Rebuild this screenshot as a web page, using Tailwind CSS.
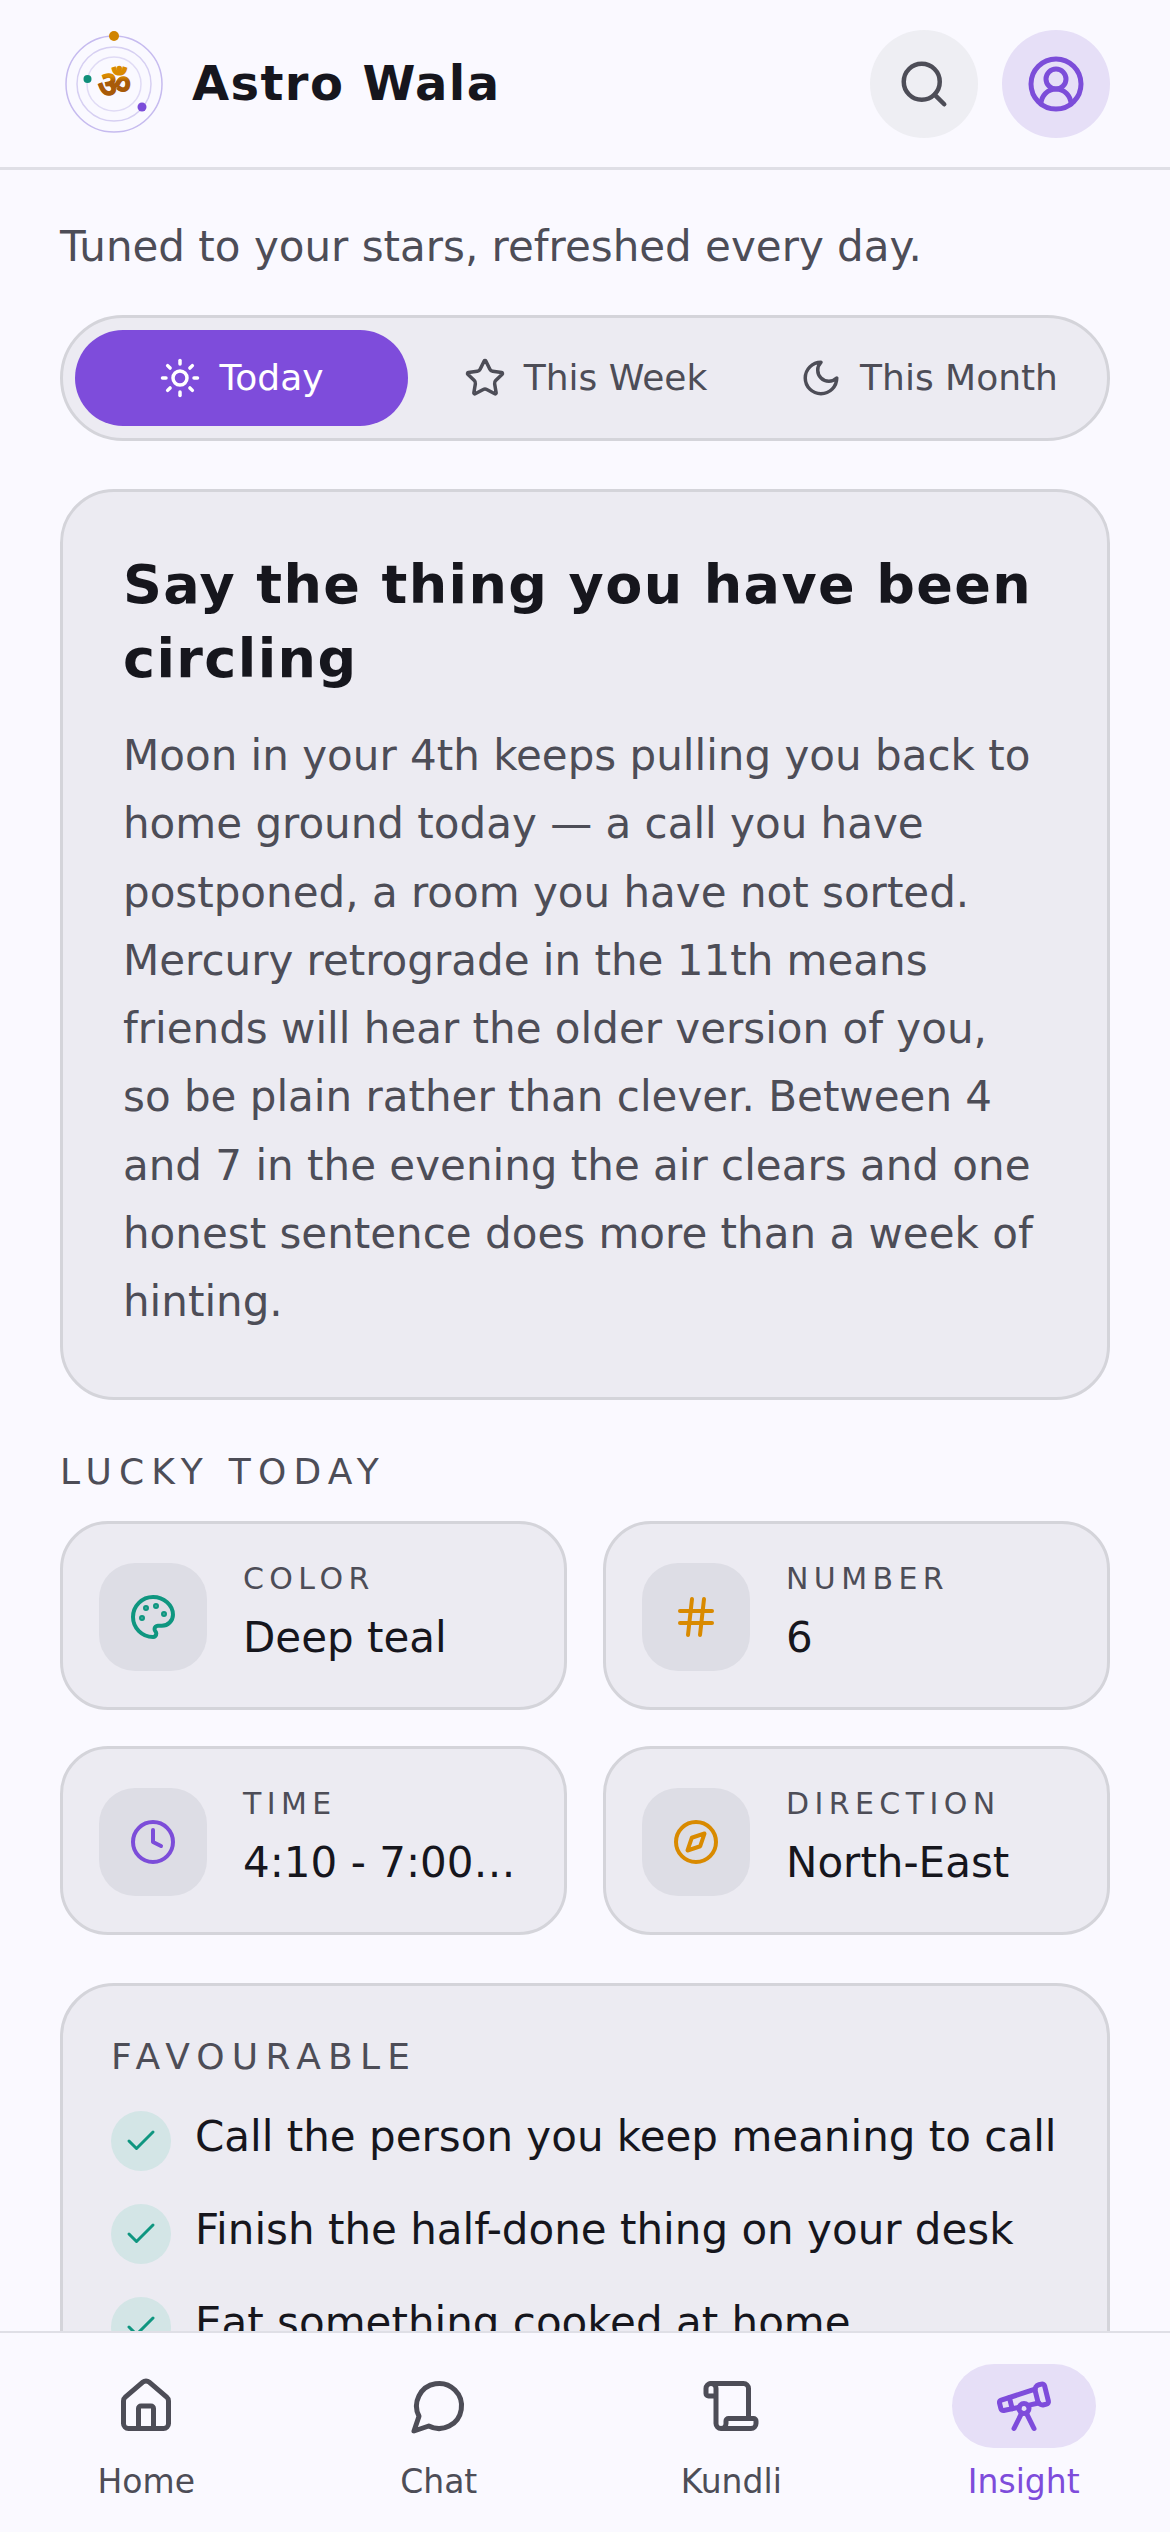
<!DOCTYPE html>
<html lang="en">
<head>
    <meta charset="UTF-8">
    <meta name="viewport" content="width=device-width, initial-scale=1.0">
    <title>Astro Wala</title>
    <script src="https://cdn.jsdelivr.net/npm/@tailwindcss/browser@4"></script>
</head>
<body class="bg-[#faf9ff] font-['DejaVu_Sans',sans-serif] text-[#16161d]">
<div class="flex flex-col h-[2532px] w-[1170px] overflow-hidden">

    <!-- header -->
    <header class="flex items-center justify-between h-[170px] shrink-0 px-[60px] border-b-[3px] border-[#dfdfe6]">
        <div class="flex items-center gap-6">
            <svg class="w-[108px] h-[108px]" viewBox="0 0 108 108" fill="none">
                <defs>
                    <linearGradient id="om" x1="0" y1="0" x2="0" y2="1">
                        <stop offset="0.3" stop-color="#d98a00"/>
                        <stop offset="0.42" stop-color="#a85a08"/>
                    </linearGradient>
                </defs>
                <circle cx="54" cy="54" r="48" stroke="#c6bbef" stroke-width="1.5"/>
                <circle cx="54" cy="54" r="37" stroke="#d6cff2" stroke-width="1.5"/>
                <circle cx="54" cy="54" r="27" stroke="#e0dbf5" stroke-width="1.5"/>
                <text x="54" y="67" text-anchor="middle" font-size="36" font-weight="700" fill="url(#om)" stroke="url(#om)" stroke-width="0.9">ॐ</text>
                <circle cx="54" cy="6" r="5" fill="#d08400"/>
                <circle cx="27.5" cy="49" r="4" fill="#0f8f7a"/>
                <circle cx="82" cy="77" r="4.5" fill="#7c4dd9"/>
            </svg>
            <h1 class="text-[48px] leading-[60px] font-bold tracking-[1.4px] -mt-[2px]">Astro Wala</h1>
        </div>
        <div class="flex gap-6">
            <button class="w-[108px] h-[108px] rounded-full bg-[#eeeef3] flex items-center justify-center">
                <svg class="w-[54px] h-[54px] text-[#4d4d57]" viewBox="0 0 24 24" fill="none" stroke="currentColor" stroke-width="2" stroke-linecap="round" stroke-linejoin="round"><path d="m21 21-4.3-4.3"/><circle cx="11" cy="11" r="8"/></svg>
            </button>
            <button class="w-[108px] h-[108px] rounded-full bg-[#e6dff7] flex items-center justify-center">
                <svg class="w-[60px] h-[60px] text-[#7c4dd9]" viewBox="0 0 24 24" fill="none" stroke="currentColor" stroke-width="2" stroke-linecap="round" stroke-linejoin="round"><path d="M18 20a6 6 0 0 0-12 0"/><circle cx="12" cy="10" r="4"/><circle cx="12" cy="12" r="10"/></svg>
            </button>
        </div>
    </header>

    <main class="flex-1 min-h-0 overflow-hidden px-[60px] pt-[45px]">
        <p class="text-[42px] leading-[63px] text-[#4d4d57]">Tuned to your stars, refreshed every day.</p>

        <!-- period tabs -->
        <div class="mt-[37px] flex h-[126px] p-3 rounded-full bg-[#ecebf2] border-[3px] border-[#d4d4da] text-[36px] text-[#4d4d57]">
            <div class="w-[333px] h-[96px] rounded-full bg-[#7e4cdb] text-white flex items-center justify-center gap-[18px]">
                <svg class="w-[42px] h-[42px]" viewBox="0 0 24 24" fill="none" stroke="currentColor" stroke-width="2" stroke-linecap="round" stroke-linejoin="round"><circle cx="12" cy="12" r="4"/><path d="M12 2v2"/><path d="M12 20v2"/><path d="m4.93 4.93 1.41 1.41"/><path d="m17.66 17.66 1.41 1.41"/><path d="M2 12h2"/><path d="M20 12h2"/><path d="m6.34 17.66-1.41 1.41"/><path d="m19.07 4.93-1.41 1.41"/></svg>
                <span>Today</span>
            </div>
            <div class="w-[355px] flex items-center justify-center gap-[18px]">
                <svg class="w-[42px] h-[42px]" viewBox="0 0 24 24" fill="none" stroke="currentColor" stroke-width="2" stroke-linecap="round" stroke-linejoin="round"><path d="M11.525 2.295a.53.53 0 0 1 .95 0l2.31 4.679a2.123 2.123 0 0 0 1.595 1.16l5.166.756a.53.53 0 0 1 .294.904l-3.736 3.638a2.123 2.123 0 0 0-.611 1.878l.882 5.14a.53.53 0 0 1-.771.56l-4.618-2.428a2.122 2.122 0 0 0-1.973 0L6.396 21.01a.53.53 0 0 1-.77-.56l.881-5.139a2.122 2.122 0 0 0-.611-1.879L2.16 9.795a.53.53 0 0 1 .294-.906l5.165-.755a2.122 2.122 0 0 0 1.597-1.16z"/></svg>
                <span>This Week</span>
            </div>
            <div class="flex-1 flex items-center justify-center gap-[18px]">
                <svg class="w-[42px] h-[42px]" viewBox="0 0 24 24" fill="none" stroke="currentColor" stroke-width="2" stroke-linecap="round" stroke-linejoin="round"><path d="M12 3a6 6 0 0 0 9 9 9 9 0 1 1-9-9Z"/></svg>
                <span>This Month</span>
            </div>
        </div>

        <!-- reading -->
        <section class="mt-[48px] rounded-[54px] bg-[#ecebf2] border-[3px] border-[#d4d4da] px-[60px] pt-[56px] pb-[61px]">
            <h2 class="text-[54px] leading-[74px] font-bold tracking-[1.4px]">Say the thing you have been circling</h2>
            <p class="mt-[26px] text-[42px] leading-[68.25px] text-[#4d4d57]">Moon in your 4th keeps pulling you back to home ground today — a call you have postponed, a room you have not sorted. Mercury retrograde in the 11th means friends will hear the older version of you, so be plain rather than clever. Between 4 and 7 in the evening the air clears and one honest sentence does more than a week of hinting.</p>
        </section>

        <h3 class="mt-[45px] text-[36px] leading-[54px] tracking-[7.2px] text-[#4d4d57]">LUCKY TODAY</h3>

        <div class="mt-[22px] grid grid-cols-2 gap-[36px]">
            <div class="h-[189px] rounded-[48px] bg-[#ecebf2] border-[3px] border-[#d4d4da] px-[36px] flex items-center gap-[36px]">
                <div class="mt-[3px] w-[108px] h-[108px] shrink-0 rounded-[36px] bg-[#dddde5] flex items-center justify-center">
                    <svg class="w-[48px] h-[48px] text-[#0f9680]" viewBox="0 0 24 24" fill="none" stroke="currentColor" stroke-width="2" stroke-linecap="round" stroke-linejoin="round"><circle cx="13.5" cy="6.5" r=".5" fill="currentColor"/><circle cx="17.5" cy="10.5" r=".5" fill="currentColor"/><circle cx="8.5" cy="7.5" r=".5" fill="currentColor"/><circle cx="6.5" cy="12.5" r=".5" fill="currentColor"/><path d="M12 2C6.5 2 2 6.5 2 12s4.5 10 10 10c.926 0 1.648-.746 1.648-1.688 0-.437-.18-.835-.437-1.125-.29-.289-.438-.652-.438-1.125a1.64 1.64 0 0 1 1.668-1.668h1.996c3.051 0 5.555-2.503 5.555-5.554C21.965 6.012 17.461 2 12 2z"/></svg>
                </div>
                <div class="min-w-0 pb-[6px]">
                    <div class="text-[30px] leading-[45px] tracking-[5.4px] text-[#4d4d57]">COLOR</div>
                    <div class="mt-[5px] text-[42px] leading-[63px] truncate">Deep teal</div>
                </div>
            </div>
            <div class="h-[189px] rounded-[48px] bg-[#ecebf2] border-[3px] border-[#d4d4da] px-[36px] flex items-center gap-[36px]">
                <div class="mt-[3px] w-[108px] h-[108px] shrink-0 rounded-[36px] bg-[#dddde5] flex items-center justify-center">
                    <svg class="w-[48px] h-[48px] text-[#d98a00]" viewBox="0 0 24 24" fill="none" stroke="currentColor" stroke-width="2" stroke-linecap="round" stroke-linejoin="round"><line x1="4" x2="20" y1="9" y2="9"/><line x1="4" x2="20" y1="15" y2="15"/><line x1="10" x2="8" y1="3" y2="21"/><line x1="16" x2="14" y1="3" y2="21"/></svg>
                </div>
                <div class="min-w-0 pb-[6px]">
                    <div class="text-[30px] leading-[45px] tracking-[5.4px] text-[#4d4d57]">NUMBER</div>
                    <div class="mt-[5px] text-[42px] leading-[63px] truncate">6</div>
                </div>
            </div>
            <div class="h-[189px] rounded-[48px] bg-[#ecebf2] border-[3px] border-[#d4d4da] px-[36px] flex items-center gap-[36px]">
                <div class="mt-[3px] w-[108px] h-[108px] shrink-0 rounded-[36px] bg-[#dddde5] flex items-center justify-center">
                    <svg class="w-[48px] h-[48px] text-[#7c4dd9]" viewBox="0 0 24 24" fill="none" stroke="currentColor" stroke-width="2" stroke-linecap="round" stroke-linejoin="round"><circle cx="12" cy="12" r="10"/><polyline points="12 6 12 12 16 14"/></svg>
                </div>
                <div class="min-w-0 pb-[6px]">
                    <div class="text-[30px] leading-[45px] tracking-[5.4px] text-[#4d4d57]">TIME</div>
                    <div class="mt-[5px] text-[42px] leading-[63px] truncate">4:10 - 7:00 PM</div>
                </div>
            </div>
            <div class="h-[189px] rounded-[48px] bg-[#ecebf2] border-[3px] border-[#d4d4da] px-[36px] flex items-center gap-[36px]">
                <div class="mt-[3px] w-[108px] h-[108px] shrink-0 rounded-[36px] bg-[#dddde5] flex items-center justify-center">
                    <svg class="w-[48px] h-[48px] text-[#d98a00]" viewBox="0 0 24 24" fill="none" stroke="currentColor" stroke-width="2" stroke-linecap="round" stroke-linejoin="round"><circle cx="12" cy="12" r="10"/><polygon points="16.24 7.76 14.12 14.12 7.76 16.24 9.88 9.88 16.24 7.76"/></svg>
                </div>
                <div class="min-w-0 pb-[6px]">
                    <div class="text-[30px] leading-[45px] tracking-[5.4px] text-[#4d4d57]">DIRECTION</div>
                    <div class="mt-[5px] text-[42px] leading-[63px] truncate">North-East</div>
                </div>
            </div>
        </div>

        <!-- favourable -->
        <section class="mt-[48px] rounded-[54px] bg-[#ecebf2] border-[3px] border-[#d4d4da] px-[48px] pt-[44px] pb-[48px]">
            <h3 class="text-[36px] leading-[54px] tracking-[7.2px] text-[#4d4d57]">FAVOURABLE</h3>
            <ul class="mt-[21px] flex flex-col gap-[27px] text-[42px] leading-[63px]">
                <li class="flex items-start gap-6">
                    <span class="mt-[6px] w-[60px] h-[60px] shrink-0 rounded-full bg-[#d3e5e6] flex items-center justify-center"><svg class="w-[36px] h-[36px] text-[#0f9680]" viewBox="0 0 24 24" fill="none" stroke="currentColor" stroke-width="2" stroke-linecap="round" stroke-linejoin="round"><path d="M20 6 9 17l-5-5"/></svg></span>
                    <span>Call the person you keep meaning to call</span>
                </li>
                <li class="flex items-start gap-6">
                    <span class="mt-[6px] w-[60px] h-[60px] shrink-0 rounded-full bg-[#d3e5e6] flex items-center justify-center"><svg class="w-[36px] h-[36px] text-[#0f9680]" viewBox="0 0 24 24" fill="none" stroke="currentColor" stroke-width="2" stroke-linecap="round" stroke-linejoin="round"><path d="M20 6 9 17l-5-5"/></svg></span>
                    <span>Finish the half-done thing on your desk</span>
                </li>
                <li class="flex items-start gap-6">
                    <span class="mt-[6px] w-[60px] h-[60px] shrink-0 rounded-full bg-[#d3e5e6] flex items-center justify-center"><svg class="w-[36px] h-[36px] text-[#0f9680]" viewBox="0 0 24 24" fill="none" stroke="currentColor" stroke-width="2" stroke-linecap="round" stroke-linejoin="round"><path d="M20 6 9 17l-5-5"/></svg></span>
                    <span>Eat something cooked at home</span>
                </li>
            </ul>
        </section>
    </main>

    <!-- bottom nav -->
    <nav class="h-[201px] shrink-0 grid grid-cols-4 bg-[#faf9ff] border-t-2 border-[#dfdfe6] pt-[31px] text-[33px] leading-[50px] text-[#4d4d57]">
        <a class="flex flex-col items-center">
            <span class="w-[144px] h-[84px] rounded-full flex items-center justify-center">
                <svg class="w-[60px] h-[60px]" viewBox="0 0 24 24" fill="none" stroke="currentColor" stroke-width="2" stroke-linecap="round" stroke-linejoin="round"><path d="M15 21v-8a1 1 0 0 0-1-1h-4a1 1 0 0 0-1 1v8"/><path d="M3 10a2 2 0 0 1 .709-1.528l7-5.999a2 2 0 0 1 2.582 0l7 5.999A2 2 0 0 1 21 10v9a2 2 0 0 1-2 2H5a2 2 0 0 1-2-2z"/></svg>
            </span>
            <span class="mt-[9px]">Home</span>
        </a>
        <a class="flex flex-col items-center">
            <span class="w-[144px] h-[84px] rounded-full flex items-center justify-center">
                <svg class="w-[60px] h-[60px]" viewBox="0 0 24 24" fill="none" stroke="currentColor" stroke-width="2" stroke-linecap="round" stroke-linejoin="round"><path d="M7.9 20A9 9 0 1 0 4 16.1L2 22Z"/></svg>
            </span>
            <span class="mt-[9px]">Chat</span>
        </a>
        <a class="flex flex-col items-center">
            <span class="w-[144px] h-[84px] rounded-full flex items-center justify-center">
                <svg class="w-[60px] h-[60px]" viewBox="0 0 24 24" fill="none" stroke="currentColor" stroke-width="2" stroke-linecap="round" stroke-linejoin="round"><path d="M19 17V5a2 2 0 0 0-2-2H4"/><path d="M8 21h12a2 2 0 0 0 2-2v-1a1 1 0 0 0-1-1H11a1 1 0 0 0-1 1v1a2 2 0 1 1-4 0V5a2 2 0 1 0-4 0v2a1 1 0 0 0 1 1h3"/></svg>
            </span>
            <span class="mt-[9px]">Kundli</span>
        </a>
        <a class="flex flex-col items-center text-[#7e4cdb]">
            <span class="w-[144px] h-[84px] rounded-full bg-[#e6dff7] flex items-center justify-center">
                <svg class="w-[60px] h-[60px]" viewBox="0 0 24 24" fill="none" stroke="currentColor" stroke-width="2" stroke-linecap="round" stroke-linejoin="round"><path d="m10.065 12.493-6.18 1.318a.934.934 0 0 1-1.108-.702l-.537-2.15a1.07 1.07 0 0 1 .691-1.265l13.504-4.44"/><path d="m13.56 11.747 4.332-.924"/><path d="m16 21-3.105-6.21"/><path d="M16.485 5.94a2 2 0 0 1 1.455-2.425l1.09-.272a1 1 0 0 1 1.212.727l1.515 6.06a1 1 0 0 1-.727 1.213l-1.09.272a2 2 0 0 1-2.425-1.455z"/><path d="m6.158 8.633 1.114 4.456"/><path d="m8 21 3.105-6.21"/><circle cx="12" cy="13" r="2"/></svg>
            </span>
            <span class="mt-[9px]">Insight</span>
        </a>
    </nav>
</div>
</body>
</html>
